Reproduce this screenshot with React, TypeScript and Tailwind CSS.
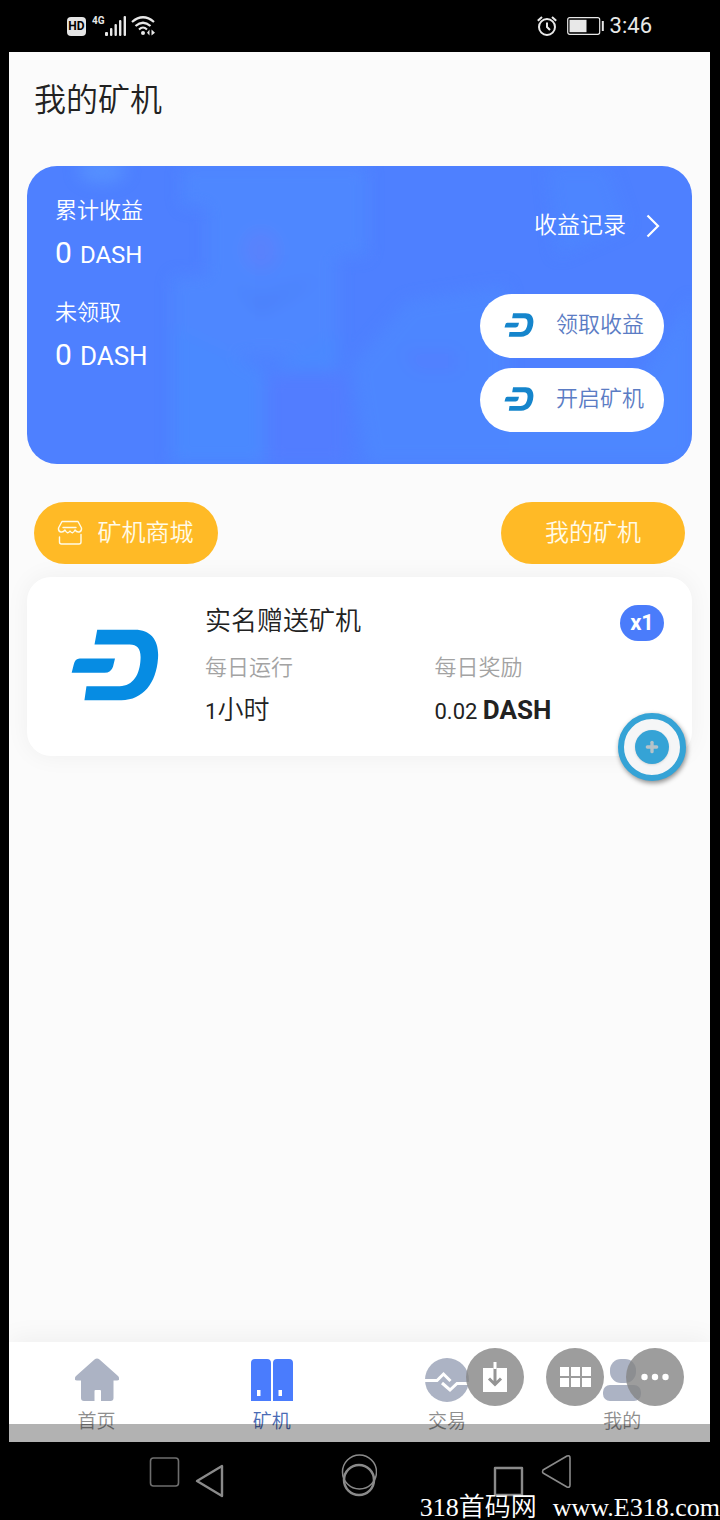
import type { ReactNode } from "react";
import { Plus } from "lucide-react";

type TabItem = {
  label: string;
  icon: ReactNode;
  active?: boolean;
};

function DashLogo({ className }: { className: string }) {
  return (
    <svg viewBox="0 0 262 214" className={className} aria-hidden="true">
      <path
        fill="currentColor"
        d="M78 2H190C240 2 263 36 259 88C254 160 215 212 150 212H40L46 170H145C185 170 205 135 207 90C209 60 198 46 175 46H70ZM26 88H131L125 112Q119 130 100 130H2L8 106Q12 88 26 88Z"
      />
    </svg>
  );
}

function StatusBar() {
  return (
    <header className="flex h-[52px] shrink-0 items-center justify-between pl-[67px] pr-[68px] text-[#e8e8e8]">
      <div className="flex items-center">
        <span className="grid h-[19px] w-[19px] place-items-center rounded-sm bg-[#e4e4e4] text-[12px] font-bold leading-none text-black">
          HD
        </span>
        <span className="ml-[6px] self-start text-[10px] font-bold leading-none">4G</span>
        <svg viewBox="0 0 22 20" className="h-5 w-[22px]" fill="currentColor" aria-hidden="true">
          <rect x="0" y="16" width="3" height="4" rx="1" />
          <rect x="5" y="12" width="2.4" height="8" rx="1" />
          <rect x="9.5" y="8" width="2.4" height="12" rx="1" />
          <rect x="14" y="4" width="2.4" height="16" rx="1" />
          <rect x="18.6" y="0" width="2.4" height="20" rx="1" />
        </svg>
        <svg viewBox="0 0 25 20" className="ml-1 h-5 w-[25px]" fill="none" stroke="currentColor" aria-hidden="true">
          <path d="M1 6Q12 -3.5 23 6" strokeWidth="2.2" />
          <path d="M4.5 10Q12 3.5 19.5 10" strokeWidth="2.2" />
          <path d="M8 13.5Q12 9.5 16 13.5" strokeWidth="2" />
          <circle cx="12" cy="17" r="2" fill="currentColor" stroke="none" />
          <path d="M18.5 13.5V19.5L16 16.8ZM20.5 13.5V19.5L24 16.8Z" fill="currentColor" stroke="none" />
        </svg>
      </div>
      <div className="flex items-center">
        <svg viewBox="0 0 20 20" className="h-5 w-5" fill="none" stroke="currentColor" strokeWidth="2" aria-hidden="true">
          <circle cx="10" cy="11" r="8" />
          <path d="M10 6.5V11L13 14" />
          <path d="M.8 4.8L5 .9M19.2 4.8L15 .9" />
        </svg>
        <svg viewBox="0 0 37 18" className="ml-[10px] h-[18px] w-[37px]" aria-hidden="true">
          <rect x=".7" y=".7" width="32" height="16.6" rx="2" fill="none" stroke="currentColor" strokeWidth="1.2" />
          <rect x="2.5" y="2.8" width="17" height="12.4" fill="currentColor" />
          <rect x="34.8" y="4" width="2" height="10" fill="currentColor" />
        </svg>
        <span className="ml-[6px] text-[22px] leading-6">3:46</span>
      </div>
    </header>
  );
}

function CardTexture() {
  return (
    <svg
      viewBox="0 0 665 298"
      preserveAspectRatio="none"
      className="absolute inset-0 h-full w-full"
      aria-hidden="true"
    >
      <defs>
        <filter id="soft" x="-20%" y="-20%" width="140%" height="140%">
          <feGaussianBlur stdDeviation="8" />
        </filter>
      </defs>
      <g filter="url(#soft)" opacity=".65">
        <ellipse cx="75" cy="5" rx="24" ry="12" fill="#5c9aff" />
        <path d="M155 0H340V90H310V190H145V110H180V40H155Z" fill="#508bff" />
        <path d="M145 160L240 205L310 165V205H238V298H145Z" fill="#488eff" />
        <path d="M240 208H320V298H240Z" fill="#557bff" />
        <ellipse cx="234" cy="84" rx="17" ry="20" fill="#6083fb" />
        <path d="M205 115L232 135L292 112L232 145Z" fill="#467bf4" />
        <path d="M325 200L380 135L480 120V250L600 230L665 130V298H340Z" fill="#4d8aff" />
        <path d="M375 185H430V205H390Z" fill="#5580ff" />
        <path d="M520 0H580L600 60L530 90Z" fill="#4e87ff" />
      </g>
    </svg>
  );
}

function EarningsCard() {
  return (
    <section className="relative overflow-hidden rounded-[30px] bg-[#4e80ff] text-white">
      <CardTexture />
      <div className="relative flex justify-between px-7 pb-8 pt-7">
        <dl>
          <dt className="text-[22px] font-[350] leading-[34px]">累计收益</dt>
          <dd className="mt-[7px] flex items-baseline gap-2 text-[30px] leading-9">
            0 <span className="text-[24px]">DASH</span>
          </dd>
          <dt className="mt-[23px] text-[22px] font-[350] leading-[34px]">未领取</dt>
          <dd className="mt-[7px] flex items-baseline gap-2 text-[30px] leading-9">
            0 <span className="text-[26px]">DASH</span>
          </dd>
        </dl>
        <div className="flex flex-col items-end">
          <a href="#records" className="mt-4 flex items-center gap-5 pr-1 text-[23px] font-[350] leading-8">
            收益记录
            <svg viewBox="0 0 14 24" className="h-6 w-[14px]" fill="none" stroke="currentColor" strokeWidth="2.2" aria-hidden="true">
              <path d="M1.5 1.5L12 12L1.5 22.5" />
            </svg>
          </a>
          <div className="mt-[52px] flex flex-col gap-[10px]">
            <PillButton label="领取收益" />
            <PillButton label="开启矿机" />
          </div>
        </div>
      </div>
    </section>
  );
}

function PillButton({ label }: { label: string }) {
  return (
    <button
      type="button"
      className="flex h-16 items-center gap-[22px] rounded-full bg-white pb-[3px] pl-6 pr-5 text-[22px] font-[350] leading-8 text-[#5b7cc4]"
    >
      <DashLogo className="h-6 w-[30px] text-[#1585cc]" />
      {label}
    </button>
  );
}

function ShopIcon() {
  return (
    <svg
      viewBox="0 0 26 26"
      className="h-[26px] w-[26px]"
      fill="none"
      stroke="currentColor"
      strokeWidth="1.4"
      strokeLinecap="round"
      strokeLinejoin="round"
      aria-hidden="true"
    >
      <path d="M5 1.500H21L24.500 8C25 13 20 13 18 10Q15.500 15 13 11Q10.500 15 8 10C6 13 1 13 1.500 8Z" />
      <path d="M6 7.5H19" />
      <path d="M2.5 17V22Q2.5 24 4.5 24H22Q24 24 24 22V14.5" />
    </svg>
  );
}

function MinerCard() {
  return (
    <article className="relative mt-[13px] flex rounded-[24px] bg-white pb-[26px] pl-11 pr-7 pt-6 shadow-[0_0_24px_rgba(0,0,0,0.05)]">
      <DashLogo className="mt-7 h-[72px] w-[88px] shrink-0 text-[#068ce3]" />
      <div className="ml-[46px] flex-1">
        <div className="flex items-start justify-between">
          <h2 className="text-[26px] font-[350] leading-10">实名赠送矿机</h2>
          <span className="mt-1 rounded-[18px] bg-[#4a7cfb] px-[10px] text-[22px] font-bold leading-9 text-white">
            x1
          </span>
        </div>
        <dl className="mt-[11px] grid grid-cols-2">
          <div>
            <dt className="text-[22px] font-[350] leading-8 text-[#a3a3a3]">每日运行</dt>
            <dd className="mt-2 text-[26px] font-[350] leading-9">
              <span className="text-[22px] font-normal">1</span>小时
            </dd>
          </div>
          <div>
            <dt className="text-[22px] font-[350] leading-8 text-[#a3a3a3]">每日奖励</dt>
            <dd className="mt-2 text-[22px] leading-9">
              0.02 <b className="text-[26px]">DASH</b>
            </dd>
          </div>
        </dl>
      </div>
      <button
        type="button"
        aria-label="悬浮球"
        className="absolute -bottom-[25px] right-[6px] grid h-[68px] w-[68px] place-items-center rounded-full border-[6px] border-[#35a3d6] bg-[#f5f6f7] shadow-[1px_2px_5px_rgba(0,0,0,0.45)]"
      >
        <span className="grid h-[34px] w-[34px] place-items-center rounded-full bg-[#35a3d6] text-[#b5c3c9] shadow">
          <Plus className="h-4 w-4" strokeWidth={5} aria-hidden="true" />
        </span>
      </button>
    </article>
  );
}

const tabs: TabItem[] = [
  {
    label: "首页",
    icon: (
      <path
        fill="currentColor"
        d="M19.5 1.5Q22 -.5 24.5 1.5L43 18Q46 22 42 22.5H38.5V40Q38.5 43 35.5 43H26V33Q26 32 25 32H20.5Q19.5 32 19.5 33V43H9Q6 43 6 40V22.5H2Q-2 22 1 18Z"
      />
    ),
  },
  {
    label: "矿机",
    active: true,
    icon: (
      <path
        fill="currentColor"
        fillRule="evenodd"
        d="M5 1H17Q21 1 21 5V43H1V5Q1 1 5 1ZM27 1H39Q43 1 43 5V43H23V5Q23 1 27 1ZM7 32V38H10.5V32ZM28.5 32V38H32V32Z"
      />
    ),
  },
  {
    label: "交易",
    icon: (
      <>
        <circle cx="22" cy="22" r="22" fill="currentColor" />
        <path
          d="M0 22.5H12L18.5 16L25.5 23M17 25L25 32L32 25.5H44"
          fill="none"
          stroke="#fff"
          strokeWidth="3"
        />
      </>
    ),
  },
  {
    label: "我的",
    icon: (
      <>
        <rect x="10" y="1" width="26" height="24" rx="11" fill="currentColor" />
        <rect x="3" y="27" width="38" height="16" rx="7" fill="currentColor" />
      </>
    ),
  },
];

function TabBar() {
  return (
    <nav className="relative grid h-[100px] shrink-0 grid-cols-4 bg-white shadow-[0_-4px_24px_rgba(0,0,0,0.05)]">
      {tabs.map((tab) => (
        <a
          key={tab.label}
          href={`#${tab.label}`}
          className={
            tab.active
              ? "flex flex-col items-center pt-4 text-[#4a7cfd]"
              : "flex flex-col items-center pt-4 text-[#acb3c4]"
          }
        >
          <svg viewBox="0 0 44 44" className="h-11 w-11" aria-hidden="true">
            {tab.icon}
          </svg>
          <span
            className={
              tab.active
                ? "mt-[6px] text-[19px] font-[350] leading-7 text-[#4a6bb5]"
                : "mt-[6px] text-[19px] font-[350] leading-7 text-[#8e8e8e]"
            }
          >
            {tab.label}
          </span>
        </a>
      ))}
      <div className="absolute inset-x-0 bottom-0 h-[18px] bg-black/30" />
      <ViewerActions />
    </nav>
  );
}

// round viewer buttons floating over the tab bar
function ViewerActions() {
  const round =
    "grid h-[58px] w-[58px] place-items-center rounded-full bg-[#858585]/80 text-white";
  return (
    <div className="absolute right-[26px] top-[6px] flex gap-[22px]">
      <button type="button" aria-label="保存" className={round}>
        <svg viewBox="0 0 26 30" className="h-[30px] w-[26px]" aria-hidden="true">
          <path d="M1 6H25V30H1Z" fill="#fff" />
          <path d="M13 6V22M7 16.5L13 22.5L19 16.5" fill="none" stroke="#949494" strokeWidth="3" />
          <path d="M13 0V7" stroke="#fff" strokeWidth="3" />
        </svg>
      </button>
      <button type="button" aria-label="全部图片" className={round}>
        <svg viewBox="0 0 31 20" className="h-5 w-[31px]" fill="currentColor" aria-hidden="true">
          <path d="M0 0H9V9H0ZM11 0H20V9H11ZM22 0H31V9H22ZM0 11H9V20H0ZM11 11H20V20H11ZM22 11H31V20H22Z" />
        </svg>
      </button>
      <button type="button" aria-label="更多" className={round}>
        <svg viewBox="0 0 28 8" className="h-2 w-7" fill="currentColor" aria-hidden="true">
          <circle cx="3.5" cy="4" r="3.2" />
          <circle cx="14" cy="4" r="3.2" />
          <circle cx="24.5" cy="4" r="3.2" />
        </svg>
      </button>
    </div>
  );
}

function SystemBar() {
  return (
    <footer className="relative flex h-[78px] shrink-0 justify-center gap-[116px] pt-3 text-[#8a8a8a]">
      <svg viewBox="0 0 76 44" className="h-11 w-[76px]" fill="none" stroke="currentColor" strokeLinejoin="round" aria-hidden="true">
        <rect x="1.5" y="4" width="28" height="28" rx="3" strokeWidth="1.6" opacity=".8" />
        <path d="M48 27L73 12V42Z" strokeWidth="2.4" />
      </svg>
      <svg viewBox="0 0 36 44" className="h-11 w-9" fill="none" stroke="currentColor" aria-hidden="true">
        <circle cx="18.5" cy="18" r="17" strokeWidth="1.5" />
        <circle cx="18" cy="26" r="15" strokeWidth="2.5" />
      </svg>
      <svg viewBox="0 0 78 44" className="h-11 w-[78px]" fill="none" stroke="currentColor" strokeLinejoin="round" aria-hidden="true">
        <rect x="2" y="14" width="27" height="27" strokeWidth="2.4" />
        <path d="M50 16Q49 18 50 19L74 33Q77 34 77 31V4Q77 1 74 2Z" strokeWidth="1.6" />
      </svg>
      <p className="absolute bottom-0 right-0 flex gap-4 whitespace-nowrap font-['Liberation_Serif','Noto_Sans_CJK_SC',serif] text-[26px] font-[350] leading-6 text-white">
        <span>318首码网</span>
        <span>www.E318.com</span>
      </p>
    </footer>
  );
}

export default function App() {
  return (
    <div className="flex min-h-screen flex-col bg-black font-['Roboto','Noto_Sans_CJK_SC',sans-serif] text-[#222]">
      <StatusBar />
      <div className="ml-[9px] mr-[10px] flex flex-1 flex-col overflow-hidden bg-[#fbfbfb]">
        <main className="flex-1 px-[18px]">
          <h1 className="px-[7px] pb-[46px] pt-7 text-[32px] font-[350] leading-10">我的矿机</h1>
          <EarningsCard />
          <div className="mt-[38px] flex justify-between px-[7px]">
            <button
              type="button"
              className="flex h-[62px] w-[184px] items-center justify-center gap-[15px] rounded-full bg-[#ffba26] pr-[2px] text-[24px] font-[350] text-[#fffbe8]"
            >
              <ShopIcon />
              矿机商城
            </button>
            <button
              type="button"
              className="h-[62px] w-[184px] rounded-full bg-[#ffba26] text-[24px] font-[350] text-[#fffbe8]"
            >
              我的矿机
            </button>
          </div>
          <MinerCard />
        </main>
        <TabBar />
      </div>
      <SystemBar />
    </div>
  );
}
